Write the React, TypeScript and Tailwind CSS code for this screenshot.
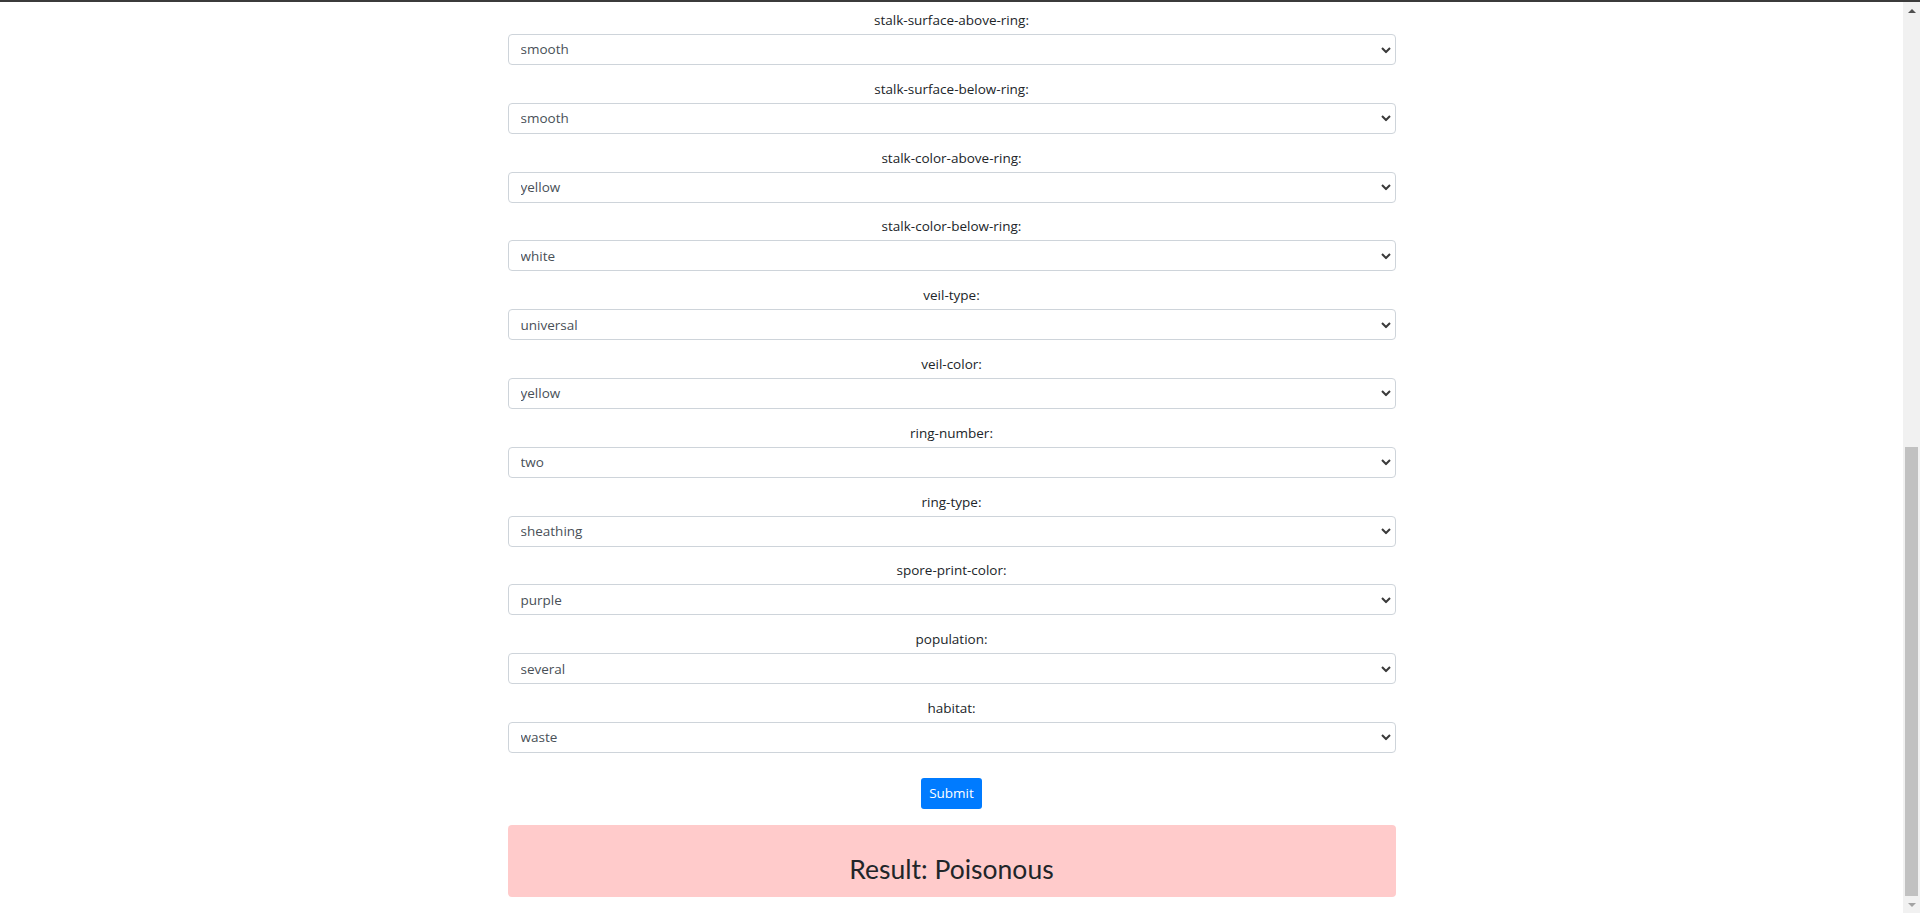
import { useState } from 'react'

const fields: { name: string; value: string }[] = [
  { name: 'stalk-surface-above-ring', value: 'smooth' },
  { name: 'stalk-surface-below-ring', value: 'smooth' },
  { name: 'stalk-color-above-ring', value: 'yellow' },
  { name: 'stalk-color-below-ring', value: 'white' },
  { name: 'veil-type', value: 'universal' },
  { name: 'veil-color', value: 'yellow' },
  { name: 'ring-number', value: 'two' },
  { name: 'ring-type', value: 'sheathing' },
  { name: 'spore-print-color', value: 'purple' },
  { name: 'population', value: 'several' },
  { name: 'habitat', value: 'waste' },
]

const Chevron = () => (
  <svg
    width="10"
    height="7"
    viewBox="0 0 10 7"
    className="pointer-events-none absolute right-[5px] top-1/2 -translate-y-1/2"
  >
    <path d="M1 1.5l4 4 4-4" fill="none" stroke="#3a3a3a" strokeWidth="2" />
  </svg>
)

const Field = ({ name, value, first }: { name: string; value: string; first: boolean }) => {
  const [selected, setSelected] = useState(value)
  return (
    <div className={first ? '' : 'mt-[13.8px]'}>
      <label className="mb-[4px] block text-center text-[13.5px] leading-[20px] text-[#212529]">
        {name}:
      </label>
      <div className="relative">
        <select
          value={selected}
          onChange={(e) => setSelected(e.target.value)}
          className="block h-[31px] w-full appearance-none rounded-[4px] border border-[#ced4da] bg-white pl-[12px] pr-6 text-[13.5px] text-[#495057] outline-none"
        >
          <option value={value}>{value}</option>
        </select>
        <Chevron />
      </div>
    </div>
  )
}

export default function App() {
  return (
    <div className="flex h-[913px] w-full flex-col overflow-hidden bg-white font-['Open_Sans','Noto_Sans',sans-serif]">
      <div className="h-[2px] w-full bg-[#3b3b3b]" />
      <div className="flex min-h-0 flex-1">
        <main className="flex-1 pt-[8px]">
          <div className="mx-auto w-[888px]">
            <form onSubmit={(e) => e.preventDefault()}>
              {fields.map((f, i) => (
                <Field key={f.name} name={f.name} value={f.value} first={i === 0} />
              ))}
              <div className="mt-[25px] flex justify-center">
                <button
                  type="submit"
                  className="h-[31px] rounded-[3px] bg-[#007bff] px-[8px] text-[13.5px] leading-[21px] text-white"
                >
                  Submit
                </button>
              </div>
            </form>
            <div className="mt-[16px] h-[72px] rounded-[4px] bg-[#ffcbcb] pt-[27px]">
              <h3 className="text-center font-['Lato','Open_Sans',sans-serif] text-[26.5px] font-normal leading-[34px] text-[#212529]">
                Result: Poisonous
              </h3>
            </div>
          </div>
        </main>
        {/* fake scrollbar, page is scrolled to the bottom */}
        <div className="flex w-[17px] flex-col bg-[#f1f1f1]">
          <div className="flex h-[17px] items-center justify-center">
            <div className="h-0 w-0 border-x-[4px] border-b-[4px] border-x-transparent border-b-[#505050]" />
          </div>
          <div className="flex flex-1 flex-col justify-end px-[2px]">
            <div className="h-[449px] bg-[#c1c1c1]" />
          </div>
          <div className="flex h-[17px] items-center justify-center">
            <div className="h-0 w-0 border-x-[4px] border-t-[4px] border-x-transparent border-t-[#a3a3a3]" />
          </div>
        </div>
      </div>
    </div>
  )
}
